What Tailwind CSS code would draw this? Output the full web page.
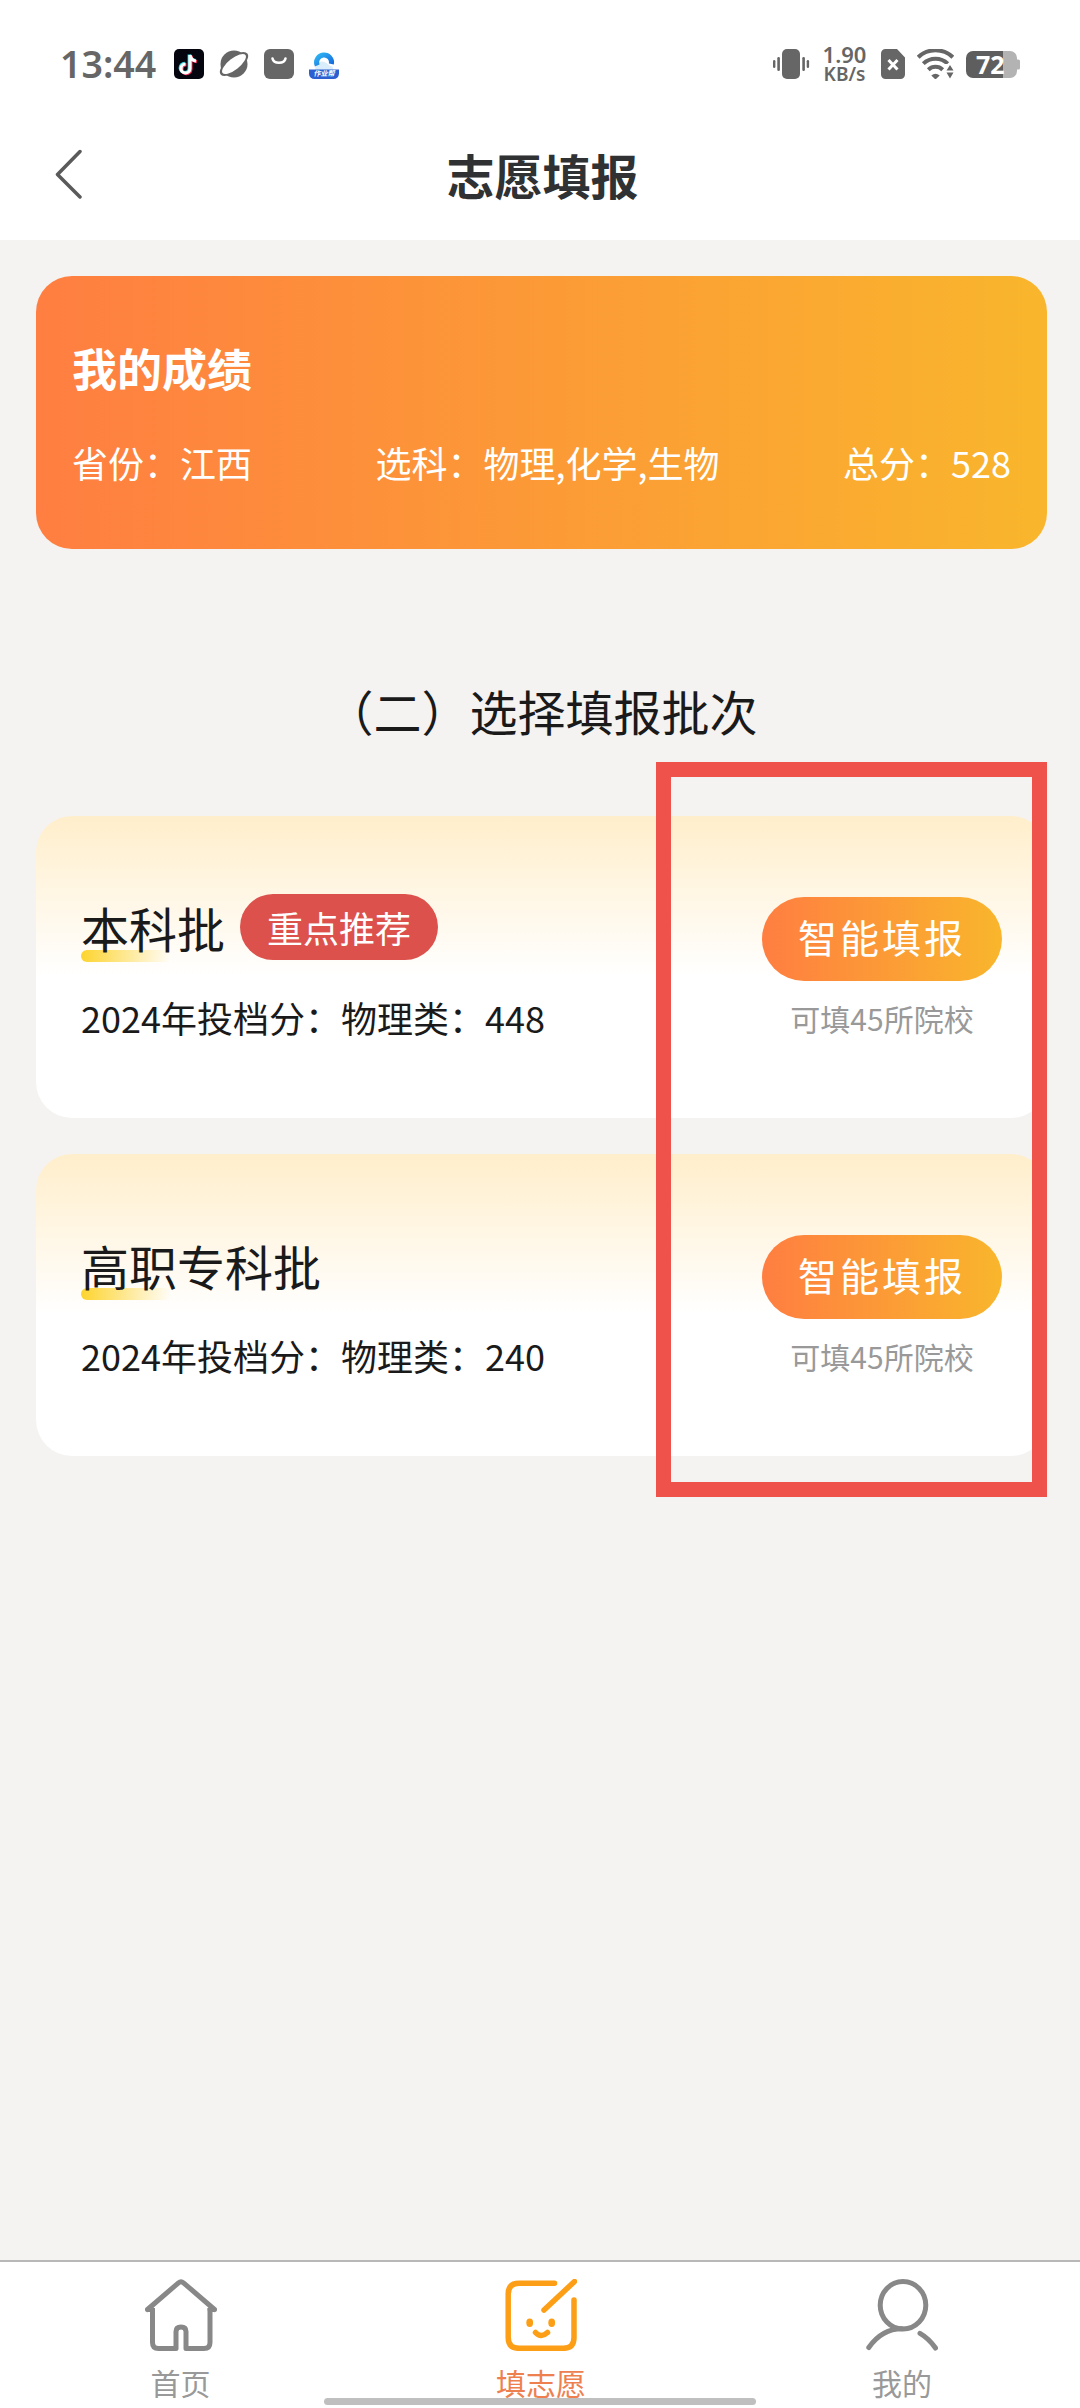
<!DOCTYPE html>
<html lang="zh-CN">
<head>
<meta charset="utf-8">
<title>志愿填报</title>
<script src="https://cdn.jsdelivr.net/npm/@tailwindcss/browser@4"></script>
</head>
<body class="bg-[#f4f3f1]">
<div class="relative flex h-[2408px] w-[1080px] flex-col overflow-hidden bg-[#f4f3f1] font-['Noto_Sans_CJK_SC',sans-serif] text-[#1a1a1a]">

  <!-- Status bar -->
  <header class="flex h-[240px] shrink-0 flex-col bg-white">
    <div class="flex h-[128px] items-center justify-between pl-[60px] pr-[60px] text-[#666]">
      <div class="flex items-center">
        <span class="w-[114px] font-['Noto_Sans',sans-serif] text-[37.500px] leading-none font-semibold">13:44</span>
        <svg class="mr-[14px] size-[30px]" viewBox="0 0 30 30">
          <rect width="30" height="30" rx="5" fill="#05050f"/>
          <g fill="none" stroke-width="3.2">
            <path d="M16 6V19.500a4.500 4.500 0 1 1-4.500-4.500M16 6c.5 3.500 2.500 5.500 6 6" stroke="#25d9e0" transform="translate(-.8 -.6)"/>
            <path d="M16 6V19.500a4.500 4.500 0 1 1-4.500-4.500M16 6c.5 3.500 2.500 5.500 6 6" stroke="#f0325a" transform="translate(.9 .7)"/>
            <path d="M16 6V19.500a4.500 4.500 0 1 1-4.500-4.500M16 6c.5 3.500 2.500 5.500 6 6" stroke="#fff"/>
          </g>
        </svg>
        <svg class="mr-[14px] h-[30px] w-[32px]" viewBox="0 0 32 30">
          <circle cx="16" cy="15" r="13.500" fill="#666"/>
          <ellipse cx="16" cy="15" rx="17" ry="7.500" transform="rotate(-38 16 15)" fill="#666"/>
          <ellipse cx="16" cy="15" rx="14.500" ry="5.600" transform="rotate(-38 16 15)" fill="#fff"/>
        </svg>
        <svg class="mr-[15px] size-[30px]" viewBox="0 0 30 30">
          <rect width="30" height="30" rx="6" fill="#666"/>
          <path d="M8.500 9.500a6.600 5.200 0 0 0 13 0" fill="none" stroke="#fff" stroke-width="2.600" stroke-linecap="round"/>
        </svg>
        <div class="relative size-[30px]">
          <svg class="size-[30px]" viewBox="0 0 30 30">
            <defs><linearGradient id="arc" x1="0" x2="1" y1="0" y2="1"><stop stop-color="#2fb4f2"/><stop offset="1" stop-color="#1467e0"/></linearGradient></defs>
            <path d="M6 22c0-7 5-11 9.500-9s4 4 8 4.500l1 4.500z" fill="#d9edfb"/>
            <path d="M8.200 16.500a7.500 7.500 0 1 1 14.200-1.500" fill="none" stroke="url(#arc)" stroke-width="5"/>
            <path d="M0 20.500h30v4a5.500 5.500 0 0 1-5.500 5.500h-19A5.500 5.500 0 0 1 0 24.500z" fill="#2c5fd0"/>
          </svg>
          <span class="absolute inset-x-0 top-[21px] text-center text-[7px] leading-[7px] font-bold whitespace-nowrap text-white italic">作业帮</span>
        </div>
      </div>
      <div class="flex items-center">
        <svg class="mr-[12px] h-[30px] w-[37px]" viewBox="0 0 37 30" fill="#666">
          <rect x="9" width="18" height="30" rx="5"/>
          <rect x="4.300" y="8" width="2.600" height="14" rx="1.200"/><rect x="0" y="11" width="2.400" height="8" rx="1.200"/>
          <rect x="29.300" y="8" width="2.600" height="14" rx="1.200"/><rect x="33.700" y="11" width="2.400" height="8" rx="1.200"/>
        </svg>
        <div class="mr-[14px] flex w-[45px] flex-col items-center font-['Noto_Sans',sans-serif] leading-none font-semibold">
          <span class="text-[22px] leading-[20px]">1.90</span>
          <span class="text-[19px] leading-[20px]">KB/s</span>
        </div>
        <svg class="mr-[12px] h-[30px] w-[24px]" viewBox="0 0 24 30">
          <path d="M4.500 0H16l8 8.500V25.500a4.500 4.500 0 0 1-4.500 4.500h-15A4.500 4.500 0 0 1 0 25.500v-21A4.500 4.500 0 0 1 4.500 0z" fill="#666"/>
          <path d="M7.500 11l9 9.500M16.500 11l-9 9.500" stroke="#fff" stroke-width="3"/>
        </svg>
        <svg class="mr-[12px] h-[30px] w-[37px]" viewBox="0 0 37 30">
          <g fill="none" stroke="#666" stroke-width="4">
            <path d="M1.200 8.200a25 25 0 0 1 34.600 0"/>
            <path d="M6.300 14.600a17.500 17.500 0 0 1 24.400 0"/>
            <path d="M11.300 20.700a10.500 10.500 0 0 1 14.400 0"/>
          </g>
          <path d="M14.300 26.500q4.200-3.500 8.400 0L18.500 30.500z" fill="#666"/>
          <path d="M28 15h9v15H28z" fill="#fff"/>
          <path d="M29.500 21.500l3.500-5.500 3.500 5.500zM29.500 23.500h7L33 29.500z" fill="#666"/>
        </svg>
        <div class="relative flex h-[27px] w-[54px] items-center">
          <svg class="absolute inset-0 h-[27px] w-[54px]" viewBox="0 0 54 27">
            <path d="M37 0h7a7 7 0 0 1 7 7v1.500h1.500a1.500 1.500 0 0 1 1.500 1.500v7a1.500 1.500 0 0 1-1.500 1.500H51V20a7 7 0 0 1-7 7h-7z" fill="#b3b3b3"/>
            <path d="M7 0h30v27H7a7 7 0 0 1-7-7V7a7 7 0 0 1 7-7z" fill="#5e5e5e"/>
          </svg>
          <span class="relative pl-[10px] font-['Noto_Sans',sans-serif] text-[25px] leading-none font-bold text-white">72</span>
        </div>
      </div>
    </div>
    <!-- Navigation -->
    <div class="grid h-[91px] grid-cols-[54px_1fr_54px] items-center">
      <svg class="ml-[54px] h-[50px] w-[30px]" viewBox="0 0 30 50">
        <path d="M26 2.500L3.500 25.500 26 48" fill="none" stroke="#5a5a5a" stroke-width="3.500" stroke-linecap="round" stroke-linejoin="round"/>
      </svg>
      <h1 class="pl-[5px] text-center text-[48px] leading-none font-bold text-[#303133]">志愿填报</h1>
    </div>
  </header>

  <main class="flex grow flex-col pt-[36px] pr-[33px] pl-[36px]">
    <!-- Score card -->
    <section class="flex h-[273px] flex-col rounded-[36px] bg-linear-to-r/srgb from-[#ff7e41] to-[#f9b62c] px-[36px] pt-[69px] text-white">
      <h2 class="text-[45px] leading-[45px] font-bold">我的成绩</h2>
      <div class="mt-[54px] flex justify-between text-[36px] leading-[36px]">
        <span>省份：江西</span><span>选科：物理,化学,生物</span><span>总分：528</span>
      </div>
    </section>

    <h2 class="mt-[137px] text-center text-[48px] leading-[48px]">（二）选择填报批次</h2>

    <div class="mt-[82px] flex flex-col gap-[36px]">
      <section class="flex h-[302px] justify-between rounded-[36px] bg-linear-to-b/srgb from-[#ffeecb] to-white to-53% pr-[45px] pl-[45px]">
        <div class="flex flex-col pt-[78px]">
          <div class="flex h-[66px] items-center gap-[15px]">
            <div class="relative">
              <div class="absolute top-[47px] left-0 h-[12px] w-[90px] rounded-full bg-linear-to-r/srgb from-[#fdd42e] to-[#fdd42e]/0"></div>
              <h3 class="relative text-[48px] leading-[48px]">本科批</h3>
            </div>
            <span class="flex h-[66px] items-center rounded-full bg-[#dc514c] px-[27px] text-[36px] leading-[36px] text-white">重点推荐</span>
          </div>
          <p class="mt-[39px] text-[36px] leading-[36px]">2024年投档分：物理类：448</p>
        </div>
        <div class="flex w-[240px] flex-col items-center pt-[81px]">
          <button class="flex h-[84px] w-[240px] items-start justify-center rounded-full bg-linear-to-r/srgb from-[#ff7e41] to-[#f9b62c] text-[39px] leading-[78px] tracking-[3px] text-white">智能填报</button>
          <p class="mt-[22px] text-[30px] leading-[30px] text-[#999]">可填45所院校</p>
        </div>
      </section>

      <section class="flex h-[302px] justify-between rounded-[36px] bg-linear-to-b/srgb from-[#ffeecb] to-white to-53% pr-[45px] pl-[45px]">
        <div class="flex flex-col pt-[78px]">
          <div class="flex h-[66px] items-center">
            <div class="relative">
              <div class="absolute top-[47px] left-0 h-[12px] w-[90px] rounded-full bg-linear-to-r/srgb from-[#fdd42e] to-[#fdd42e]/0"></div>
              <h3 class="relative text-[48px] leading-[48px]">高职专科批</h3>
            </div>
          </div>
          <p class="mt-[39px] text-[36px] leading-[36px]">2024年投档分：物理类：240</p>
        </div>
        <div class="flex w-[240px] flex-col items-center pt-[81px]">
          <button class="flex h-[84px] w-[240px] items-start justify-center rounded-full bg-linear-to-r/srgb from-[#ff7e41] to-[#f9b62c] text-[39px] leading-[78px] tracking-[3px] text-white">智能填报</button>
          <p class="mt-[22px] text-[30px] leading-[30px] text-[#999]">可填45所院校</p>
        </div>
      </section>
    </div>
  </main>

  <!-- Tab bar -->
  <nav class="grid h-[148px] shrink-0 grid-cols-3 border-t-2 border-[#b8b8b8] bg-white text-[30px] leading-[30px] text-[#999]">
    <div class="flex flex-col items-center pt-[17px] pl-px">
      <svg class="size-[72px]" viewBox="0 0 72 72" fill="none" stroke="#888" stroke-width="5" stroke-linecap="round" stroke-linejoin="round">
        <path d="M2.500 30.500H7M69.500 30.500H65M2.500 30.500L33.500 3.800Q36 1.700 38.500 3.800L69.500 30.500"/>
        <path stroke-linecap="butt" d="M7.500 29V63.500Q7.500 69.500 13.500 69.500H31V52.500Q31 48 36 48T41 52.500V69.500H59Q65 69.500 65 63.500V29"/>
      </svg>
      <span class="mt-[16px]">首页</span>
    </div>
    <div class="flex flex-col items-center pt-[17px] pl-[2px] text-[#ee8050]">
      <svg class="size-[72px]" viewBox="0 0 72 72" fill="none" stroke="#fc9f16" stroke-width="5.500" stroke-linecap="round" stroke-linejoin="round">
        <path d="M49.500 4.300H14Q3.200 4.300 3.200 15V58.500Q3.200 69.300 14 69.300H58.500Q69 69.300 69 58.500V21M39 31L69.500 2.500"/>
        <path d="M30.500 53.500Q36 59.500 42.500 53.500"/>
        <g fill="#fc9f16" stroke="none"><ellipse cx="24.700" cy="43.700" rx="3.400" ry="4.200"/><ellipse cx="46.700" cy="43.700" rx="3.400" ry="4.200"/></g>
      </svg>
      <span class="mt-[16px]">填志愿</span>
    </div>
    <div class="flex flex-col items-center pt-[17px] pl-[4px]">
      <svg class="size-[72px]" viewBox="0 0 72 72" fill="none" stroke="#888" stroke-width="5" stroke-linecap="round">
        <ellipse cx="37" cy="26.200" rx="22.800" ry="23.700"/>
        <path d="M2.800 68.500Q16 49.800 36 49.800M54 54.300Q63 59.500 69.500 69"/>
      </svg>
      <span class="mt-[16px]">我的</span>
    </div>
  </nav>

  <!-- Highlight frame over the action column -->
  <div class="absolute top-[762px] left-[656px] h-[735px] w-[391px] border-[15px] border-[#ef524b]"></div>
  <!-- Gesture bar -->
  <div class="absolute top-[2398px] left-[324px] h-[7px] w-[432px] rounded-full bg-[#bfbfbf]"></div>
</div>
</body>
</html>
